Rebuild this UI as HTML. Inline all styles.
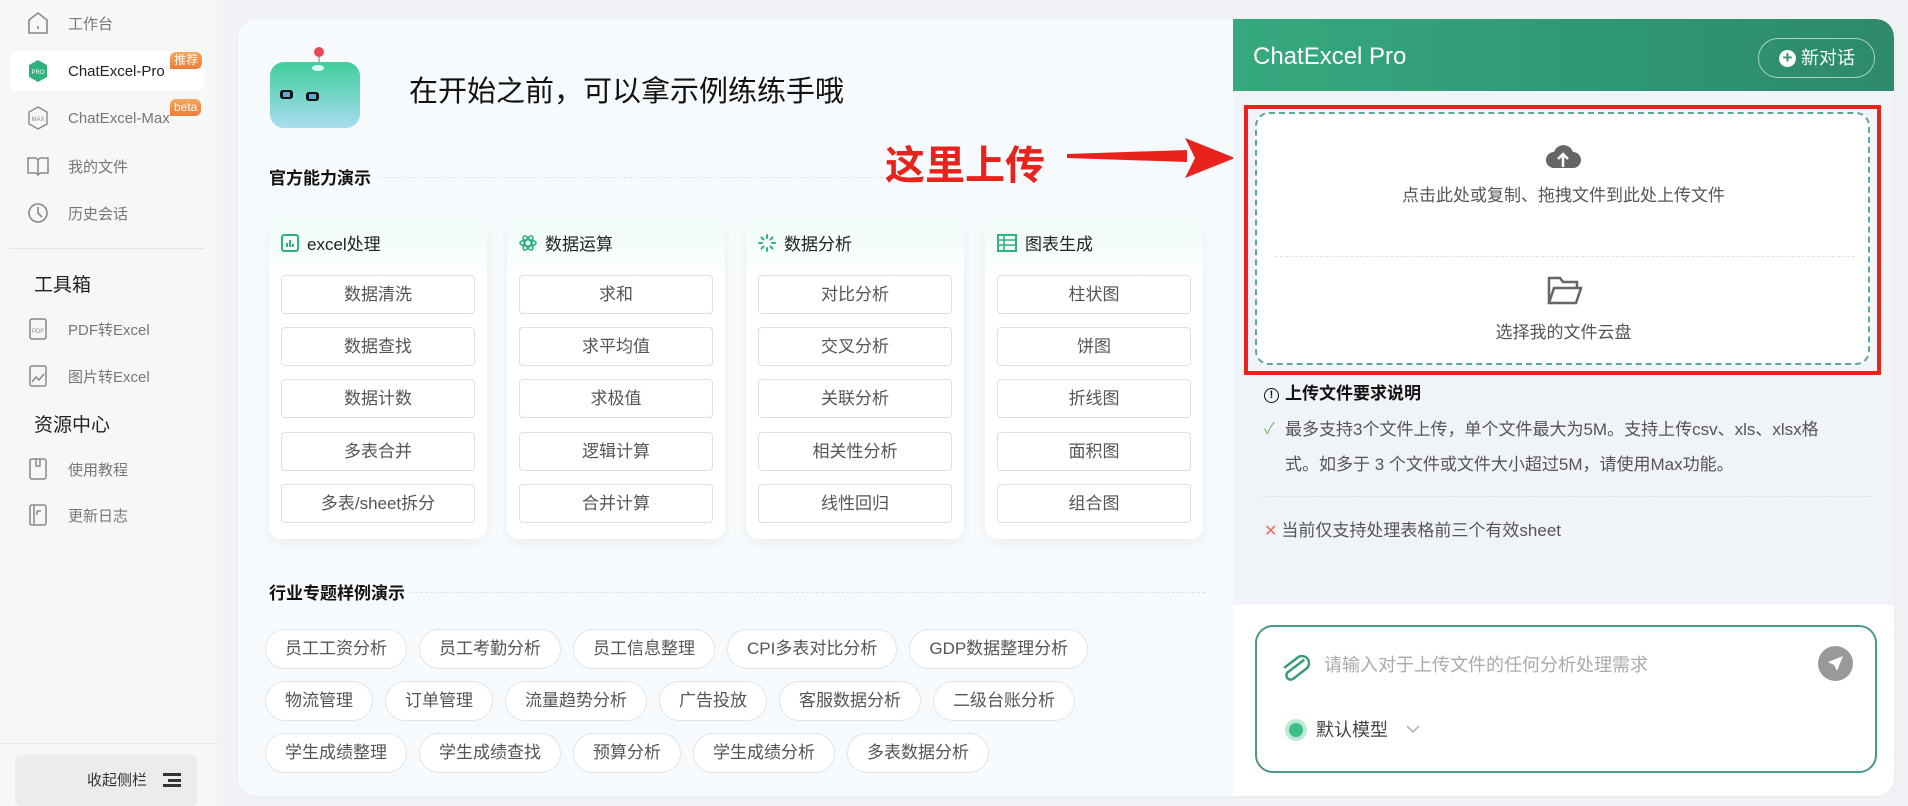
<!DOCTYPE html>
<html><head><meta charset="utf-8"><style>
*{box-sizing:border-box;margin:0;padding:0}
body{width:1908px;height:806px;overflow:hidden;background:#f0f2f5;font-family:"Liberation Sans","Noto Sans CJK SC",sans-serif;position:relative;color:#333}
.abs{position:absolute}
#side{left:0;top:0;width:217px;height:806px;background:#f6f7f9}
.si{position:absolute;left:0;width:217px;height:40px;display:flex;align-items:center;font-size:15px;color:#777}
.si svg{position:absolute;left:26px}
.si span{position:absolute;left:68px}
.sh{position:absolute;left:34px;font-size:19px;color:#222}
#main{left:238px;top:19px;width:1656px;height:777px;background:#f6fafc;border-radius:18px;overflow:hidden;box-shadow:0 1px 4px rgba(0,0,0,.04)}
.sec{position:absolute;font-size:17px;font-weight:bold;color:#111}
.dash{position:absolute;border-top:1px dashed #dde2e6;height:0}
.card{position:absolute;top:201px;width:218px;height:319px;background:linear-gradient(#eefbf6,#fff 60px);border-radius:12px;box-shadow:0 4px 10px rgba(0,0,0,.05)}
.card .h{position:absolute;left:12px;top:10px;font-size:17px;color:#222;display:flex;align-items:center;gap:8px}
.card .b{position:absolute;left:12px;width:194px;height:39px;border:1px solid #dcdfe3;border-radius:4px;background:#fff;font-size:17px;color:#555;text-align:center;line-height:37px}
.tags{position:absolute;left:27px;display:flex;gap:12px}
.tag{height:40px;border:1px solid #e2e5e8;border-radius:20px;background:#fff;font-size:17px;color:#555;padding:0 19px;line-height:38px;white-space:nowrap}
#right{left:995px;top:0;width:661px;height:777px;background:#fff}
</style></head><body>
<div id="side" class="abs">
 <div class="si" style="top:3px"><svg width="24" height="26" viewBox="0 0 24 26"><path d="M3 10L12 3l9 7v13H3z" fill="none" stroke="#888" stroke-width="1.6"/><path d="M12 16v3" stroke="#888" stroke-width="1.6"/></svg><span>工作台</span></div>
 <div class="abs" style="left:10px;top:51px;width:194px;height:40px;background:#fff;border-radius:6px"></div>
 <div class="si" style="top:51px"><svg width="24" height="26" viewBox="0 0 24 26"><path d="M12 2l9 5v12l-9 5-9-5V7z" fill="#2fb27e"/><text x="12" y="16" font-size="6" fill="#fff" text-anchor="middle" font-family="Liberation Sans">PRO</text></svg><span style="color:#222">ChatExcel-Pro</span></div>
 <div class="abs" style="left:170px;top:52px;background:linear-gradient(#f7a65a,#ee7b3a);color:#fff;font-size:12px;padding:0 4px;border-radius:6px 6px 6px 0;line-height:17px">推荐</div>
 <div class="si" style="top:98px"><svg width="24" height="26" viewBox="0 0 24 26"><path d="M12 2l9 5v12l-9 5-9-5V7z" fill="none" stroke="#888" stroke-width="1.4"/><text x="12" y="16" font-size="6" fill="#888" text-anchor="middle" font-family="Liberation Sans">MAX</text></svg><span>ChatExcel-Max</span></div>
 <div class="abs" style="left:170px;top:99px;background:linear-gradient(#f7a65a,#ee7b3a);color:#fff;font-size:12px;padding:0 4px;border-radius:6px 6px 6px 0;line-height:17px">beta</div>
 <div class="si" style="top:146px"><svg width="24" height="26" viewBox="0 0 24 26"><path d="M2 5h8l2 2 2-2h8v15h-8l-2 2-2-2H2z" fill="none" stroke="#888" stroke-width="1.5"/><path d="M12 7v15" stroke="#888" stroke-width="1.5"/></svg><span>我的文件</span></div>
 <div class="si" style="top:193px"><svg width="24" height="26" viewBox="0 0 24 26"><circle cx="12" cy="13" r="9" fill="none" stroke="#888" stroke-width="1.6"/><path d="M12 7v6l4 4" fill="none" stroke="#888" stroke-width="1.6"/></svg><span>历史会话</span></div>
 <div class="abs" style="left:10px;top:248px;width:194px;border-top:1px solid #e3e5e8"></div>
 <div class="sh" style="top:270px">工具箱</div>
 <div class="si" style="top:309px"><svg width="24" height="26" viewBox="0 0 24 26"><rect x="4" y="3" width="16" height="20" rx="2" fill="none" stroke="#888" stroke-width="1.5"/><text x="12" y="17" font-size="6" fill="#888" text-anchor="middle" font-family="Liberation Sans">PDF</text></svg><span>PDF转Excel</span></div>
 <div class="si" style="top:356px"><svg width="24" height="26" viewBox="0 0 24 26"><rect x="4" y="3" width="16" height="20" rx="2" fill="none" stroke="#888" stroke-width="1.5"/><path d="M6 19l4-5 3 3 5-6" fill="none" stroke="#888" stroke-width="1.5"/></svg><span>图片转Excel</span></div>
 <div class="sh" style="top:410px">资源中心</div>
 <div class="si" style="top:449px"><svg width="24" height="26" viewBox="0 0 24 26"><rect x="4" y="3" width="16" height="20" rx="2" fill="none" stroke="#888" stroke-width="1.5"/><path d="M10 3v7h4V3" fill="none" stroke="#888" stroke-width="1.5"/></svg><span>使用教程</span></div>
 <div class="si" style="top:495px"><svg width="24" height="26" viewBox="0 0 24 26"><rect x="4" y="3" width="16" height="20" rx="2" fill="none" stroke="#888" stroke-width="1.5"/><path d="M8 3v20M11 9h4M11 9v4" fill="none" stroke="#888" stroke-width="1.5"/></svg><span>更新日志</span></div>
 <div class="abs" style="left:0;top:743px;width:217px;border-top:1px solid #e6e8eb"></div>
 <div class="abs" style="left:15px;top:755px;width:182px;height:51px;background:#ececec;border-radius:6px;font-size:15px;color:#333;line-height:51px;padding-left:72px">收起侧栏<span style="position:absolute;left:148px;top:18px;width:18px;height:14px;border-top:3px solid #333;border-bottom:3px solid #333"><i style="position:absolute;left:5px;top:2.5px;width:13px;border-top:3px solid #333"></i></span></div>
</div>

<div id="main" class="abs">
 <svg class="abs" style="left:30px;top:27px" width="100" height="84" viewBox="0 0 100 84"><line x1="51" y1="6" x2="51" y2="18" stroke="#bbb" stroke-width="2"/><circle cx="51" cy="6" r="5" fill="#e84a5a"/><defs><linearGradient id="g" x1="0" y1="0" x2="0" y2="1"><stop offset="0" stop-color="#3fcf9c"/><stop offset="1" stop-color="#a8dcf0"/></linearGradient></defs><rect x="2" y="16" width="90" height="66" rx="14" fill="url(#g)"/><ellipse cx="50" cy="22" rx="6" ry="3" fill="#dff"/><rect x="12" y="44" width="13" height="9" rx="3" fill="#111"/><rect x="38" y="46" width="13" height="9" rx="3" fill="#111"/><rect x="15" y="46" width="7" height="5" fill="#5ad" /><rect x="41" y="48" width="7" height="5" fill="#5ad"/></svg>
 <div class="abs" style="left:171px;top:49px;font-size:29px;color:#111">在开始之前，可以拿示例练练手哦</div>
 <div class="sec" style="left:31px;top:145px">官方能力演示</div>
 <div class="dash" style="left:140px;top:158px;width:510px"></div>
 <div class="abs" style="left:647px;top:114px;font-size:40px;font-weight:bold;color:#e8231d">这里上传</div>
 <svg class="abs" style="left:829px;top:117px" width="170" height="44" viewBox="0 0 170 44"><path d="M0 20L120 20L120 14L0 18z" fill="#e8231d"/><path d="M0 20L120 20L120 26L0 22z" fill="#e8231d"/><path d="M118 2L168 22L118 42L128 22z" fill="#e8231d"/></svg>

 <div class="card" style="left:31px"><div class="h"><svg width="18" height="18"><rect x="1" y="1" width="16" height="16" rx="2" fill="none" stroke="#2fb27e" stroke-width="2"/><path d="M6 13V9M9 13V6M12 13v-3" stroke="#2fb27e" stroke-width="2"/></svg>excel处理</div>
  <div class="b" style="top:55px">数据清洗</div><div class="b" style="top:107px">数据查找</div><div class="b" style="top:159px">数据计数</div><div class="b" style="top:212px">多表合并</div><div class="b" style="top:264px">多表/sheet拆分</div></div>
 <div class="card" style="left:269px"><div class="h"><svg width="18" height="18" viewBox="0 0 18 18"><g fill="none" stroke="#2fb27e" stroke-width="1.6"><ellipse cx="9" cy="9" rx="8" ry="3.2"/><ellipse cx="9" cy="9" rx="8" ry="3.2" transform="rotate(60 9 9)"/><ellipse cx="9" cy="9" rx="8" ry="3.2" transform="rotate(-60 9 9)"/></g></svg>数据运算</div>
  <div class="b" style="top:55px">求和</div><div class="b" style="top:107px">求平均值</div><div class="b" style="top:159px">求极值</div><div class="b" style="top:212px">逻辑计算</div><div class="b" style="top:264px">合并计算</div></div>
 <div class="card" style="left:508px"><div class="h"><svg width="18" height="18" viewBox="0 0 18 18"><g stroke="#2fb27e" stroke-width="2" stroke-linecap="round"><path d="M9 1v3M9 14v3M1 9h3M14 9h3M3.5 3.5l2 2M12.5 12.5l2 2M3.5 14.5l2-2M12.5 5.5l2-2"/></g></svg>数据分析</div>
  <div class="b" style="top:55px">对比分析</div><div class="b" style="top:107px">交叉分析</div><div class="b" style="top:159px">关联分析</div><div class="b" style="top:212px">相关性分析</div><div class="b" style="top:264px">线性回归</div></div>
 <div class="card" style="left:747px"><div class="h"><svg width="20" height="18"><rect x="1" y="1" width="18" height="16" fill="none" stroke="#2fb27e" stroke-width="2"/><path d="M1 6h18M1 11h18M7 1v16" stroke="#2fb27e" stroke-width="1.6"/></svg>图表生成</div>
  <div class="b" style="top:55px">柱状图</div><div class="b" style="top:107px">饼图</div><div class="b" style="top:159px">折线图</div><div class="b" style="top:212px">面积图</div><div class="b" style="top:264px">组合图</div></div>

 <div class="sec" style="left:31px;top:560px">行业专题样例演示</div>
 <div class="dash" style="left:172px;top:573px;width:795px"></div>
 <div class="tags" style="top:610px"><div class="tag">员工工资分析</div><div class="tag">员工考勤分析</div><div class="tag">员工信息整理</div><div class="tag">CPI多表对比分析</div><div class="tag">GDP数据整理分析</div></div>
 <div class="tags" style="top:662px"><div class="tag">物流管理</div><div class="tag">订单管理</div><div class="tag">流量趋势分析</div><div class="tag">广告投放</div><div class="tag">客服数据分析</div><div class="tag">二级台账分析</div></div>
 <div class="tags" style="top:714px"><div class="tag">学生成绩整理</div><div class="tag">学生成绩查找</div><div class="tag">预算分析</div><div class="tag">学生成绩分析</div><div class="tag">多表数据分析</div></div>

 <div id="right" class="abs">
  <div class="abs" style="left:0;top:0;width:661px;height:586px;background:#f0f3f7"></div>
  <div class="abs" style="left:0;top:0;width:661px;height:72px;background:linear-gradient(90deg,#37a97f,#2f9672 60%,#2e8a69);border-radius:0 18px 0 0"></div>
  <div class="abs" style="left:20px;top:24px;font-size:24px;color:#fff">ChatExcel Pro</div>
  <div class="abs" style="left:525px;top:19px;width:117px;height:40px;border:1px solid rgba(255,255,255,.6);border-radius:20px;color:#fff;font-size:18px;line-height:38px;padding-left:42px"><span style="position:absolute;left:20px;top:11px;width:17px;height:17px;border-radius:50%;background:#fff;color:#2f9672;font-size:17px;line-height:16px;text-align:center;font-weight:bold">+</span>新对话</div>
  <div class="abs" style="left:11px;top:86px;width:637px;height:270px;border:4px solid #e8231d"></div>
  <div class="abs" style="left:22px;top:93px;width:615px;height:253px;border:2px dashed #5aa898;border-radius:14px;background:#fff"></div>
  <svg class="abs" style="left:312px;top:121px" width="36" height="30" viewBox="0 0 36 30"><path d="M9 28a8 8 0 0 1 0-16a10 10 0 0 1 19 0a8 8 0 0 1 0 16z" fill="#666"/><path d="M18 27V15M13 19l5-5 5 5" fill="none" stroke="#fff" stroke-width="2.5"/></svg>
  <div class="abs" style="left:0;width:661px;top:162px;text-align:center;font-size:17px;color:#555">点击此处或复制、拖拽文件到此处上传文件</div>
  <div class="abs" style="left:42px;top:237px;width:580px;border-top:1px dashed #e0e3e6"></div>
  <svg class="abs" style="left:314px;top:256px" width="36" height="32" viewBox="0 0 36 32"><path d="M2 28V3h11l3 4h14v6" fill="none" stroke="#666" stroke-width="2.5"/><path d="M2 28l5-15h27l-5 15z" fill="none" stroke="#666" stroke-width="2.5"/></svg>
  <div class="abs" style="left:0;width:661px;top:299px;text-align:center;font-size:17px;color:#555">选择我的文件云盘</div>
  <div class="abs" style="left:31px;top:360px;font-size:17px;font-weight:bold;color:#111"><span style="display:inline-block;width:15px;height:15px;border:1.5px solid #111;border-radius:50%;font-size:11px;line-height:12px;text-align:center;vertical-align:1px;margin-right:6px">!</span>上传文件要求说明</div>
  <div class="abs" style="left:31px;top:393px;font-size:17px;color:#555;line-height:35px;width:575px"><span style="color:#7cc06a;position:absolute;left:0;font-size:16px">✓</span><div style="padding-left:21px">最多支持3个文件上传，单个文件最大为5M。支持上传csv、xls、xlsx格式。如多于 3 个文件或文件大小超过5M，请使用Max功能。</div></div>
  <div class="abs" style="left:29px;top:477px;width:610px;border-top:1px dashed #dde1e5"></div>
  <div class="abs" style="left:31px;top:497px;font-size:17px;color:#555"><span style="color:#e86b6b;margin-right:4px;font-size:16px">✕</span>当前仅支持处理表格前三个有效sheet</div>
  <div class="abs" style="left:22px;top:606px;width:622px;height:148px;border:2px solid #4c9a85;border-radius:18px;background:#fff"></div>
  <svg class="abs" style="left:47px;top:632px" width="30" height="34" viewBox="0 0 30 34"><path d="M22 8L9 22a4 4 0 0 0 6 6L26 16a7 7 0 0 0-10-10L5 18" fill="none" stroke="#3a9a7c" stroke-width="2.5" stroke-linecap="round" transform="rotate(10 15 17)"/></svg>
  <div class="abs" style="left:91px;top:632px;font-size:18px;color:#aaa">请输入对于上传文件的任何分析处理需求</div>
  <div class="abs" style="left:585px;top:627px;width:35px;height:35px;border-radius:50%;background:#999"><svg width="35" height="35" viewBox="0 0 35 35"><path d="M25 10L10 16l6 3 3 6z" fill="#fff"/></svg></div>
  <div class="abs" style="left:52px;top:700px;width:22px;height:22px;border-radius:50%;background:#bde9d6"><div style="margin:4px;width:14px;height:14px;border-radius:50%;background:#3cc08a"></div></div>
  <div class="abs" style="left:83px;top:697px;font-size:18px;color:#444">默认模型</div>
  <svg class="abs" style="left:173px;top:705px" width="14" height="10"><path d="M1 2l6 6 6-6" fill="none" stroke="#aaa" stroke-width="1.4"/></svg>
 </div>
</div>
</body></html>
